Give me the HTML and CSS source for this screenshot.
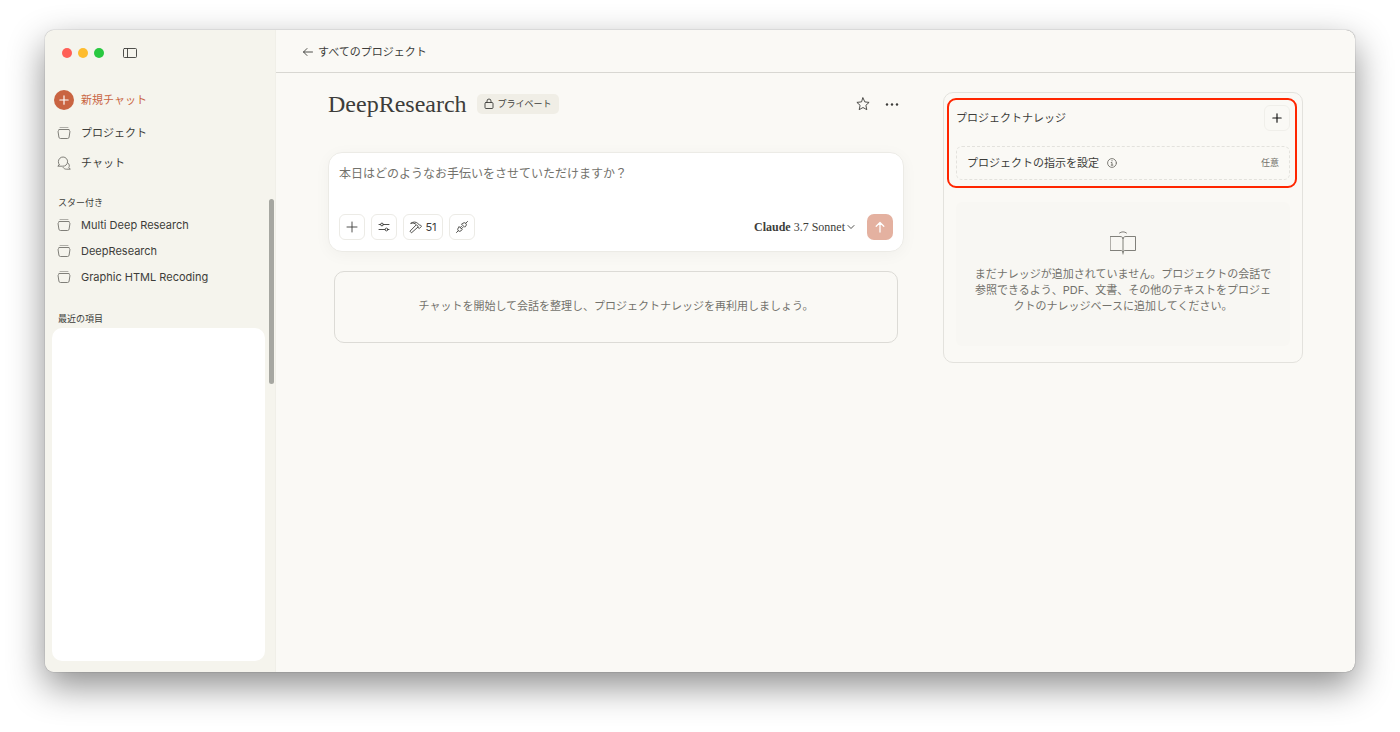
FILE: index.html
```html
<!DOCTYPE html>
<html lang="ja">
<head>
    <meta charset="UTF-8">
    <meta name="viewport" content="width=device-width, initial-scale=1.0">
    <title>DeepResearch</title>
    <link rel="stylesheet" href="styles.css">
</head>
<body>
    <!-- shared icon shapes -->
    <svg class="sprite" width="0" height="0" aria-hidden="true">
        <symbol id="icon-box" viewBox="0 0 14 14">
            <path opacity="0.6" d="M3 1.500h8"/>
            <path d="M2 3.500h10M1.500 4.500c-.4.400-.5.900-.4 1.400l.8 5.200a1.600 1.600 0 0 0 1.600 1.400h7a1.600 1.600 0 0 0 1.600-1.400l.8-5.200c.1-.5 0-1-.4-1.400"/>
        </symbol>
        <symbol id="icon-plus" viewBox="0 0 12 12">
            <path d="M6 1v10M1 6h10"/>
        </symbol>
    </svg>

    <div class="window">
        <aside class="sidebar">
            <div class="titlebar">
                <span class="light red"></span>
                <span class="light yellow"></span>
                <span class="light green"></span>
                <button class="toggle" aria-label="サイドバー">
                    <svg width="14" height="12" viewBox="0 0 14 12"><rect x="0.5" y="1.5" width="13" height="9" rx="1"/><path d="M4.5 1.5v9"/></svg>
                </button>
            </div>

            <nav class="nav">
                <a class="nav-link new-chat" href="#">
                    <span class="new-icon"><svg width="10" height="10"><use href="#icon-plus"/></svg></span>
                    新規チャット
                </a>
                <a class="nav-link" href="#">
                    <svg class="icon" width="14" height="14"><use href="#icon-box"/></svg>
                    プロジェクト
                </a>
                <a class="nav-link" href="#">
                    <svg class="icon" width="14" height="14" viewBox="0 0 14 14"><path d="M2.200 8.800L.8 10.200h4.800a4.600 4.600 0 1 0-4.200-4.600c0 1.200.3 2.300.8 3.200M10.800 6.800c1.600 1.200 2 3.400 1 4.700l1.500 1.700H9.500c-1.500 0-2.600-.6-3.400-1.700"/></svg>
                    チャット
                </a>
            </nav>

            <h2 class="section-label">スター付き</h2>
            <nav class="starred">
                <a class="nav-link" href="#"><svg class="icon" width="14" height="14"><use href="#icon-box"/></svg>Multi Deep Research</a>
                <a class="nav-link" href="#"><svg class="icon" width="14" height="14"><use href="#icon-box"/></svg>DeepResearch</a>
                <a class="nav-link" href="#"><svg class="icon" width="14" height="14"><use href="#icon-box"/></svg>Graphic HTML Recoding</a>
            </nav>

            <h2 class="section-label">最近の項目</h2>
            <div class="recents"></div>
            <div class="scrollbar"></div>
        </aside>

        <main class="main">
            <header class="topbar">
                <a class="back" href="#">
                    <svg width="10" height="10" viewBox="0 0 10 10"><path d="M9.500 5H.5M4 1.500L.5 5 4 8.500"/></svg>
                    すべてのプロジェクト
                </a>
            </header>

            <div class="content">
                <section class="project">
                    <div class="project-head">
                        <h1>DeepResearch</h1>
                        <span class="badge">
                            <svg width="10" height="12" viewBox="0 0 10 12"><rect x="1" y="4.5" width="8" height="6" rx="1"/><path d="M3 4.500V3a2 2 0 0 1 4 0v1.500"/></svg>
                            プライベート
                        </span>
                        <div class="head-actions">
                            <button aria-label="スター">
                                <svg width="14" height="14" viewBox="0 0 14 14"><path d="M7 .9l1.800 4 4.300.5-3.200 2.900.9 4.400L7 10.500l-3.800 2.200.9-4.400L.9 5.400l4.300-.5z"/></svg>
                            </button>
                            <button aria-label="メニュー">
                                <svg class="dots" width="14" height="14" viewBox="0 0 14 14"><circle cx="2" cy="7.5" r="1.2"/><circle cx="7" cy="7.5" r="1.2"/><circle cx="12" cy="7.5" r="1.2"/></svg>
                            </button>
                        </div>
                    </div>

                    <form class="composer">
                        <textarea aria-label="メッセージ" rows="1" placeholder="本日はどのようなお手伝いをさせていただけますか？"></textarea>
                        <div class="tools">
                            <button type="button" class="tool" aria-label="追加"><svg width="12" height="12"><use href="#icon-plus"/></svg></button>
                            <button type="button" class="tool" aria-label="設定">
                                <svg width="12" height="12" viewBox="0 0 12 12"><path d="M1 3.500h1.500M5.500 3.500H11M1 8.500h6M10 8.500h1"/><circle cx="4" cy="3.5" r="1.4"/><circle cx="8.5" cy="8.5" r="1.4"/></svg>
                            </button>
                            <button type="button" class="tool wide">
                                <svg width="13" height="13" viewBox="0 0 13 13"><path d="M2 2.200C4.200.5 7 .7 8.700 2.400l1.600 1.500 1.200.2 1 1.200-2.200 2.200-1.200-1-.2-1.300L7.300 3.600C5.800 2.200 4 1.800 2 2.200zM6.800 4.300L1 10.200l1.500 1.600 6.200-5.500"/></svg>
                                51
                            </button>
                            <button type="button" class="tool" aria-label="接続">
                                <svg width="12" height="12" viewBox="0 0 12 12"><path d="M11.500.5L9.900 2.100M.5 11.500l1.600-1.600M5.800 3.400l2.800 2.800 1.300-1.300a2 2 0 0 0-2.800-2.800zM3.400 5.800l2.800 2.800-1.300 1.300a2 2 0 0 1-2.800-2.800zM4.200 6.600l1.400-1.400M5.400 7.800l1.400-1.400"/></svg>
                            </button>
                            <button type="button" class="model" aria-haspopup="menu">
                                <span><b>Claude</b> 3.7 Sonnet</span>
                                <svg width="8" height="6" viewBox="0 0 8 6"><path d="M1 1.500l3 3 3-3"/></svg>
                            </button>
                            <button type="submit" class="send" aria-label="送信">
                                <svg width="12" height="12" viewBox="0 0 12 12"><path d="M6 11V1.500M2.200 5.200L6 1.500l3.800 3.700"/></svg>
                            </button>
                        </div>
                    </form>

                    <p class="no-chats">チャットを開始して会話を整理し、プロジェクトナレッジを再利用しましょう。</p>
                </section>

                <aside class="knowledge">
                    <div class="knowledge-head">
                        <h2>プロジェクトナレッジ</h2>
                        <button class="add" aria-label="ナレッジを追加"><svg width="10" height="10"><use href="#icon-plus"/></svg></button>
                    </div>
                    <button class="instructions">
                        プロジェクトの指示を設定
                        <svg width="10" height="10" viewBox="0 0 10 10"><circle cx="5" cy="5" r="4.4"/><path d="M4.200 4.500H5v2.600M4.200 7.100h1.700M5 2.500v.4"/></svg>
                        <span class="optional">任意</span>
                    </button>
                    <div class="empty">
                        <svg width="26" height="24" viewBox="0 0 26 24"><path d="M.5 5.500h9.500c2 0 3 1 3 2.500 0-1.500 1-2.500 3-2.500h9.500v14H15c-1.200 0-2 .8-2 2 0-1.200-.8-2-2-2H.5zM13 8v15M9.500 2c2-1.600 5-1.600 7 0"/></svg>
                        <p>まだナレッジが追加されていません。プロジェクトの会話で参照できるよう、PDF、文書、その他のテキストをプロジェクトのナレッジベースに追加してください。</p>
                    </div>
                    <div class="highlight"></div>
                </aside>
            </div>
        </main>
    </div>
</body>
</html>
```
FILE: styles.css
```css
* {
    box-sizing: border-box;
}
body {
    margin: 0;
    padding: 30px 45px 60px;
    background: #fff;
    color: #3d3d3a;
    font-family: Inter, "Noto Sans CJK JP", sans-serif;
    font-size: 11px;
    line-height: 16px;
}
h1, h2, p {
    margin: 0;
    font-weight: 400;
}
a {
    color: inherit;
    text-decoration: none;
}
button {
    display: flex;
    align-items: center;
    justify-content: center;
    padding: 0;
    border: 0;
    background: none;
    color: inherit;
    font: inherit;
}
svg {
    flex: none;
    fill: none;
    stroke: currentColor;
    stroke-width: 0.9;
    stroke-linecap: round;
    stroke-linejoin: round;
}
.sprite {
    position: absolute;
}
.window {
    display: flex;
    min-height: calc(100vh - 90px);
    border-radius: 9px;
    overflow: hidden;
    background: #faf9f5;
    box-shadow: 0 0 1px rgba(0, 0, 0, 0.6), 0 14px 36px rgba(0, 0, 0, 0.45);
}

/* sidebar */
.sidebar {
    position: relative;
    display: flex;
    flex-direction: column;
    flex: none;
    width: 231px;
    padding: 0 10px 11px 7px;
    background: #f5f4ed;
    border-right: 1px solid #f0efe8;
}
.titlebar {
    display: flex;
    align-items: center;
    gap: 6px;
    height: 46px;
    padding-left: 10px;
}
.light {
    width: 10px;
    height: 10px;
    border-radius: 50%;
}
.red {
    background: #ff5f57;
}
.yellow {
    background: #febc2e;
}
.green {
    background: #28c840;
}
.toggle {
    margin-left: 13px;
}
.nav {
    padding-top: 9px;
}
.nav-link {
    display: flex;
    align-items: center;
    gap: 10px;
    height: 30px;
    padding-left: 5px;
}
.nav-link .icon {
    color: #73726c;
}
.new-chat {
    gap: 7px;
    margin-bottom: 3px;
    padding-left: 2px;
    color: #c96442;
}
.new-icon {
    display: flex;
    align-items: center;
    justify-content: center;
    width: 20px;
    height: 20px;
    border-radius: 50%;
    background: #c96442;
    color: #fff;
}
.new-icon svg {
    stroke-width: 1.4;
}
.section-label {
    margin-top: 16px;
    padding-left: 6px;
    font-size: 9px;
    line-height: 18px;
}
.starred {
    padding-bottom: 4px;
}
.starred .nav-link {
    height: 26px;
}
.recents {
    flex: 1;
    border-radius: 10px;
    background: #fff;
}
.scrollbar {
    position: absolute;
    top: 169px;
    right: 1px;
    width: 5px;
    height: 185px;
    border-radius: 3px;
    background: #a6a7a1;
}

/* main */
.main {
    flex: 1;
    min-width: 0;
}
.topbar {
    display: flex;
    align-items: center;
    height: 43px;
    padding: 2px 27px 0;
    border-bottom: 1px solid #d8d7d2;
}
.back {
    display: flex;
    align-items: center;
    gap: 5px;
}
.content {
    display: grid;
    grid-template-columns: 8fr 5fr;
    align-items: start;
    gap: 39px;
    padding: 19px 52px;
}
.project-head {
    display: flex;
    align-items: center;
    gap: 10px;
    height: 24px;
}
h1 {
    font-family: "Liberation Serif", serif;
    font-size: 24px;
    line-height: 24px;
}
.badge {
    display: flex;
    align-items: center;
    gap: 4px;
    height: 20px;
    padding: 0 7px;
    border-radius: 5px;
    background: #f0eee6;
    font-size: 9px;
}
.head-actions {
    display: flex;
    gap: 15px;
    margin-left: auto;
    padding-right: 5px;
}
.dots {
    fill: currentColor;
    stroke: none;
}
.composer {
    margin-top: 36px;
    padding: 11px 10px;
    border: 1px solid #ecebe6;
    border-radius: 14px;
    background: #fff;
    box-shadow: 0 3px 16px rgba(0, 0, 0, 0.04);
}
.composer textarea {
    display: block;
    width: 100%;
    height: 50px;
    padding: 0;
    border: 0;
    outline: 0;
    resize: none;
    background: none;
    color: inherit;
    font: inherit;
    font-size: 12px;
    line-height: 20px;
}
.composer textarea::placeholder {
    color: #73726c;
}
.tools {
    display: flex;
    align-items: center;
    gap: 6px;
}
.tool, .add {
    width: 26px;
    height: 26px;
    border: 1px solid #ecebe6;
    border-radius: 6px;
}
.wide {
    gap: 3px;
    width: 40px;
}
.model {
    gap: 2px;
    margin-left: auto;
    margin-right: 6px;
    font-family: "Liberation Serif", serif;
    font-size: 12px;
}
.model b {
    font-weight: 700;
}
.send {
    width: 26px;
    height: 26px;
    border-radius: 7px;
    background: #e4b1a0;
    color: #fff;
}
.send svg {
    stroke-width: 1.3;
}
.no-chats {
    margin: 19px 6px 0;
    padding: 26px 16px 28px;
    border: 1px solid #dcdbd6;
    border-radius: 10px;
    color: #73726c;
    text-align: center;
}

/* project knowledge */
.knowledge {
    position: relative;
    padding: 12px 12px 16px;
    border: 1px solid #e3e2dd;
    border-radius: 10px;
}
.knowledge-head {
    display: flex;
    align-items: center;
    justify-content: space-between;
    margin-bottom: 15px;
}
.knowledge h2 {
    font-size: 11px;
}
.add {
    border-color: #f0efea;
    color: #141413;
}
.add svg {
    stroke-width: 1.4;
}
.instructions {
    justify-content: flex-start;
    gap: 8px;
    width: 100%;
    height: 34px;
    padding: 0 10px;
    border: 1px dashed #e3e2dd;
    border-radius: 6px;
}
.instructions svg {
    color: #73726c;
}
.optional {
    margin-left: auto;
    color: #73726c;
    font-size: 9px;
}
.empty {
    display: flex;
    flex-direction: column;
    align-items: center;
    gap: 11px;
    margin-top: 22px;
    padding: 29px 16px 32px;
    border-radius: 6px;
    background: #f8f7f3;
    color: #73726c;
    text-align: center;
}
.highlight {
    position: absolute;
    inset: 5px 5px auto 3px;
    height: 90px;
    border: 2px solid #ff2600;
    border-radius: 9px;
    pointer-events: none;
}
```
